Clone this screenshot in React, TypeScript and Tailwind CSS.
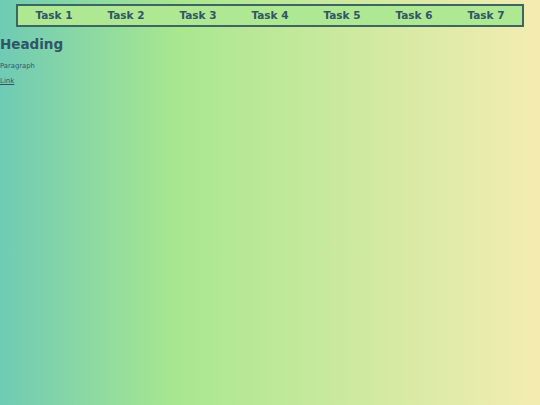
const tasks = ["Task 1", "Task 2", "Task 3", "Task 4", "Task 5", "Task 6", "Task 7"];

export default function App() {
  return (
    <div
      className="h-[405px] w-[540px] overflow-hidden bg-[linear-gradient(to_right,#6fcbb5_0%,#a9e78f_33%,#f4ecb1_100%)] text-[#2f5566]"
      style={{ fontFamily: '"DejaVu Sans", sans-serif' }}
    >
      <nav className="mx-4 mt-1 flex h-[23px] items-center border-2 border-[#3d6660] bg-[#aee892]">
        {tasks.map((t) => (
          <a key={t} className="flex-1 text-center text-[10.5px] font-bold leading-none">
            {t}
          </a>
        ))}
      </nav>
      <h1 className="mt-[11px] text-[13.5px] font-bold leading-none">Heading</h1>
      <p className="mt-[11px] text-[6.8px] leading-none">Paragraph</p>
      <a href="#" className="mt-[9px] block text-[7px] leading-none underline">
        Link
      </a>
    </div>
  );
}
